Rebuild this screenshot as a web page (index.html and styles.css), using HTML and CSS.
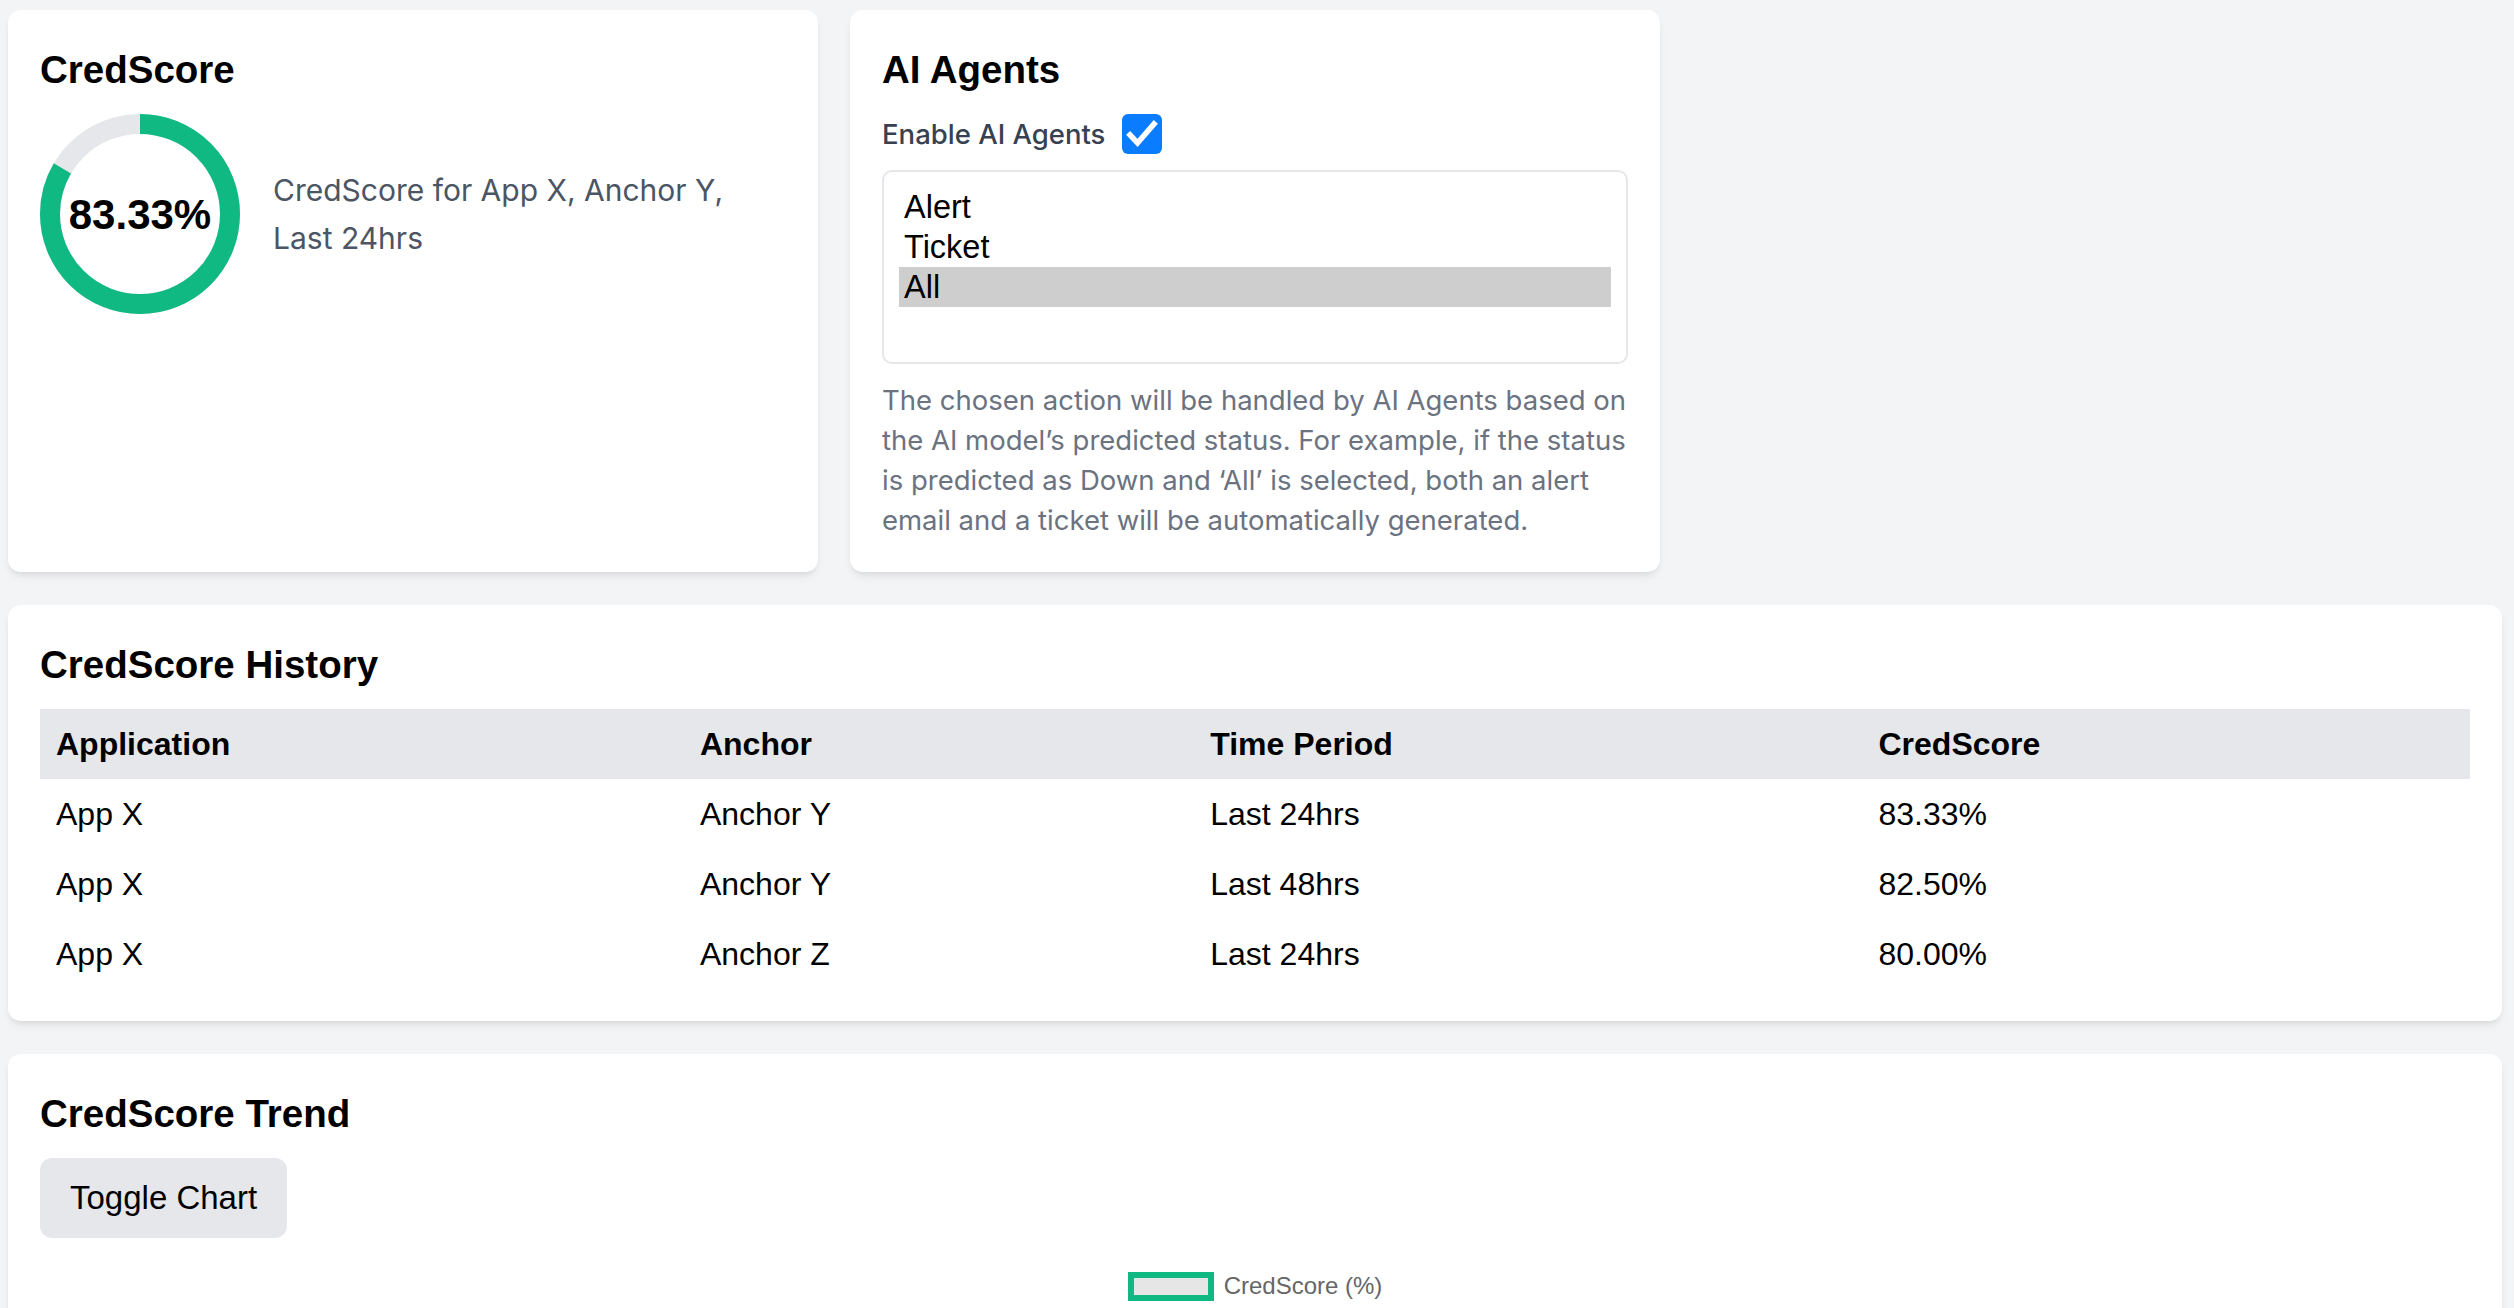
FILE: index.html
```html
<!DOCTYPE html>
<html lang="en">
<head>
    <meta charset="UTF-8">
    <meta name="viewport" content="width=device-width, initial-scale=1.0">
    <title>CredScore Dashboard</title>
    <link rel="stylesheet" href="styles.css">
</head>
<body>
    <div class="dashboard">
        <!-- Aktuální skóre -->
        <div class="card">
            <h2>CredScore</h2>
            <div class="score">
                <svg class="donut" width="200" height="200" viewBox="0 0 200 200">
                    <circle cx="100" cy="100" r="90" fill="none" stroke="#e5e7eb" stroke-width="20"/>
                    <circle cx="100" cy="100" r="90" fill="none" stroke="#10b981" stroke-width="20"
                            stroke-dasharray="471.2 565.5" transform="rotate(-90 100 100)"/>
                    <text x="100" y="115" text-anchor="middle" class="donut-value">83.33%</text>
                </svg>
                <p class="score-text">CredScore for App X, Anchor Y, Last 24hrs</p>
            </div>
        </div>

        <!-- AI agenti -->
        <div class="card">
            <h2>AI Agents</h2>
            <div class="toggle">
                <span>Enable AI Agents</span>
                <span class="checkbox">
                    <svg width="40" height="40" viewBox="0 0 40 40">
                        <path d="M8 21 L15.5 29 L32 10" fill="none" stroke="#fff" stroke-width="5.5" stroke-linecap="square" stroke-linejoin="miter"/>
                    </svg>
                </span>
            </div>
            <div class="listbox">
                <div class="option">Alert</div>
                <div class="option">Ticket</div>
                <div class="option selected">All</div>
            </div>
            <p class="note">The chosen action will be handled by AI Agents based on the AI model’s predicted status. For example, if the status is predicted as Down and ‘All’ is selected, both an alert email and a ticket will be automatically generated.</p>
        </div>

        <!-- Historie -->
        <div class="card wide">
            <h2>CredScore History</h2>
            <table class="history">
                <thead>
                    <tr>
                        <th class="col-app">Application</th>
                        <th class="col-anchor">Anchor</th>
                        <th class="col-period">Time Period</th>
                        <th class="col-score">CredScore</th>
                    </tr>
                </thead>
                <tbody>
                    <tr><td>App X</td><td>Anchor Y</td><td>Last 24hrs</td><td>83.33%</td></tr>
                    <tr><td>App X</td><td>Anchor Y</td><td>Last 48hrs</td><td>82.50%</td></tr>
                    <tr><td>App X</td><td>Anchor Z</td><td>Last 24hrs</td><td>80.00%</td></tr>
                </tbody>
            </table>
        </div>

        <!-- Trend -->
        <div class="card wide">
            <h2>CredScore Trend</h2>
            <button class="btn">Toggle Chart</button>
            <div class="chart">
                <div class="legend">
                    <span class="legend-box"></span>
                    <span>CredScore (%)</span>
                </div>
                <svg class="chart-canvas" width="100%" height="300">
                    <text x="42" y="24" text-anchor="end" class="tick">100</text>
                </svg>
            </div>
        </div>
    </div>
</body>
</html>
```

FILE: styles.css
```css
html {
    overflow: hidden;
}

body {
    margin: 0;
    padding: 0;
    background: #f3f4f6;
    color: #000;
    font-family: 'Liberation Sans', Arial, sans-serif;
}

.dashboard {
    display: grid;
    grid-template-columns: repeat(3, 1fr);
    gap: 33px 32px;
    padding: 10px 12px 0 8px;
}

.card {
    background: #fff;
    border-radius: 13px;
    padding: 32px;
    box-shadow: 0 6px 10px -2px rgba(0, 0, 0, 0.08), 0 3px 6px -3px rgba(0, 0, 0, 0.08);
}

.card.wide {
    grid-column: 1 / -1;
}

.card h2 {
    margin: 0 0 16px;
    font-size: 38.5px;
    line-height: 56px;
    font-weight: bold;
}

/* skóre */
.score {
    display: flex;
    align-items: center;
    gap: 33px;
}

.donut {
    flex-shrink: 0;
    display: block;
}

.donut-value {
    font-family: 'Liberation Sans', Arial, sans-serif;
    font-size: 42px;
    font-weight: bold;
    fill: #000;
}

.score-text {
    margin: 0;
    max-width: 490px;
    font-family: Inter, 'Noto Sans', sans-serif;
    font-size: 30px;
    line-height: 48px;
    color: #4b5563;
}

/* AI agenti */
.toggle {
    display: flex;
    align-items: center;
    gap: 17px;
    height: 40px;
    margin-bottom: 16px;
    font-family: Inter, 'Noto Sans', sans-serif;
    font-size: 27.5px;
    font-weight: 500;
    color: #374151;
}

.checkbox {
    width: 40px;
    height: 40px;
    border-radius: 6px;
    background: #0a7cff;
    display: flex;
}

.listbox {
    box-sizing: border-box;
    height: 194px;
    padding: 15px;
    border: 2px solid #e5e7eb;
    border-radius: 10px;
}

.option {
    padding-left: 5px;
    font-size: 32.5px;
    line-height: 40px;
}

.option.selected {
    background: #cecece;
}

.note {
    margin: 16px 0 0;
    font-family: Inter, 'Noto Sans', sans-serif;
    font-size: 27.5px;
    line-height: 40px;
    color: #6b7280;
}

/* tabulka */
.history {
    width: 100%;
    border-collapse: collapse;
    font-size: 32px;
}

.history th,
.history td {
    padding: 16px;
    line-height: 38px;
    text-align: left;
}

.history thead tr {
    background: #e5e7eb;
}

.history th {
    font-weight: bold;
}

.col-app { width: 26.5%; }
.col-anchor { width: 21%; }
.col-period { width: 27.5%; }
.col-score { width: 25%; }

/* trend */
.btn {
    display: block;
    padding: 16px 30px;
    font-family: 'Liberation Sans', Arial, sans-serif;
    font-size: 33px;
    line-height: 48px;
    color: #000;
    background: #e5e7eb;
    border: none;
    border-radius: 12px;
    cursor: pointer;
}

.chart {
    margin-top: 33px;
}

.legend {
    display: flex;
    justify-content: center;
    align-items: center;
    gap: 10px;
    height: 30px;
    font-size: 24px;
    color: #666;
}

.legend-box {
    box-sizing: border-box;
    width: 86px;
    height: 29px;
    border: 6px solid #10b981;
    background: #e6e6e6;
}

.chart-canvas {
    display: block;
}

.tick {
    font-family: 'Liberation Sans', Arial, sans-serif;
    font-size: 24px;
    fill: #666;
}
```
